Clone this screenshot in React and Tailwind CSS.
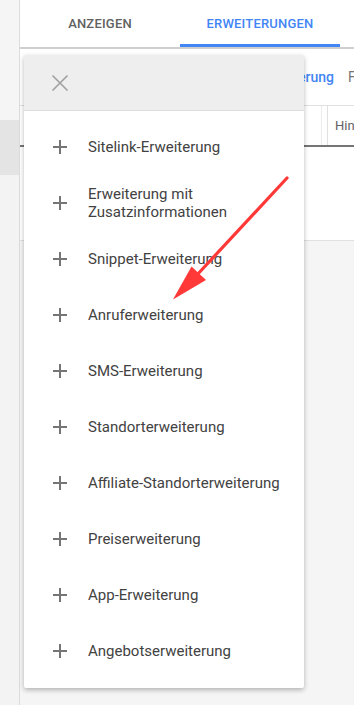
import React from "react";

const items = [
  "Sitelink-Erweiterung",
  "Erweiterung mit Zusatzinformationen",
  "Snippet-Erweiterung",
  "Anruferweiterung",
  "SMS-Erweiterung",
  "Standorterweiterung",
  "Affiliate-Standorterweiterung",
  "Preiserweiterung",
  "App-Erweiterung",
  "Angebotserweiterung",
];

const PlusIcon = () => (
  <svg className="w-6 h-6 shrink-0" viewBox="0 0 24 24" fill="none" stroke="#757575" strokeWidth="2">
    <path d="M12 5v14M5 12h14" />
  </svg>
);

const App = () => {
  return (
    <div
      className="relative w-[354px] h-[705px] overflow-hidden flex bg-[#f5f5f5]"
      style={{ fontFamily: "Roboto, 'Noto Sans', sans-serif" }}
    >
      {/* sidebar */}
      <div className="w-[20px] shrink-0 flex flex-col border-r border-[#dcdcdc] bg-[#f3f3f3]">
        <div className="h-[120px] bg-[#f5f5f5]"></div>
        <div className="h-[55px] bg-[#e4e4e4]"></div>
        <div className="flex-1 bg-[#f3f3f3]"></div>
      </div>

      {/* main */}
      <div className="flex-1 flex flex-col min-w-0">
        {/* tabs */}
        <div className="h-[49px] shrink-0 flex bg-white border-b-2 border-[#cfcfcf]">
          <div className="w-[160px] shrink-0 flex items-center justify-center text-[13px] font-medium text-[#616161] tracking-[0.2px]">
            ANZEIGEN
          </div>
          <div className="w-[160px] shrink-0 flex items-center justify-center text-[13px] font-medium text-[#4285f4] tracking-[0.2px] border-b-[3px] border-[#4285f4] pt-[3px]">
            ERWEITERUNGEN
          </div>
        </div>

        {/* toolbar */}
        <div className="h-[56px] shrink-0 flex items-center bg-white whitespace-nowrap">
          <div className="flex-1"></div>
          <span className="shrink-0 text-[14px] font-medium text-[#4285f4]">Anruferweiterung</span>
          <span className="shrink-0 w-[6px] ml-[14px] text-[14px] text-[#757575]">Filter</span>
        </div>

        {/* table header */}
        <div className="h-[42px] shrink-0 flex bg-white border-t border-[#e0e0e0] border-b-2 border-b-[#757575] whitespace-nowrap">
          <div className="flex-1 border-r border-[#ececec]"></div>
          <div className="w-[6px] shrink-0 border-r border-[#e0e0e0]"></div>
          <div className="w-[26px] shrink-0 pl-[7px] flex items-center text-[13px] text-[#616161]">
            Hinweise
          </div>
        </div>

        {/* table body */}
        <div className="h-[94px] shrink-0 bg-white border-b border-[#e0e0e0]"></div>
        <div className="flex-1 bg-[#f5f5f5]"></div>
      </div>

      {/* dropdown menu */}
      <div className="absolute left-[24px] top-[55px] w-[280px] bg-white rounded-[2px] shadow-[0_2px_5px_rgba(0,0,0,0.28)] overflow-hidden">
        <div className="h-[56px] flex items-center pl-[24px] bg-[#eeeeee] border-b border-[#dcdcdc]">
          <svg className="w-6 h-6" viewBox="0 0 24 24" fill="none" stroke="#a0a0a0" strokeWidth="1.6">
            <path d="M4.5 4.5l15 15M19.5 4.5l-15 15" />
          </svg>
        </div>
        <div className="pt-[8px] pb-[9px]">
          {items.map((label) => (
            <div key={label} className="h-[56px] flex items-center pl-[24px] pr-4 gap-4">
              <PlusIcon />
              <span className="text-[15px] leading-[18px] text-[#424242]">{label}</span>
            </div>
          ))}
        </div>
      </div>

      {/* red arrow annotation */}
      <svg className="absolute left-0 top-0 pointer-events-none" width="354" height="705" viewBox="0 0 354 705">
        <line x1="287" y1="178" x2="196" y2="276" stroke="#ff3838" strokeWidth="3.2" strokeLinecap="round" />
        <polygon points="173,299.5 191.5,266.5 206,280" fill="#ff3838" />
      </svg>
    </div>
  );
};

export default App;
